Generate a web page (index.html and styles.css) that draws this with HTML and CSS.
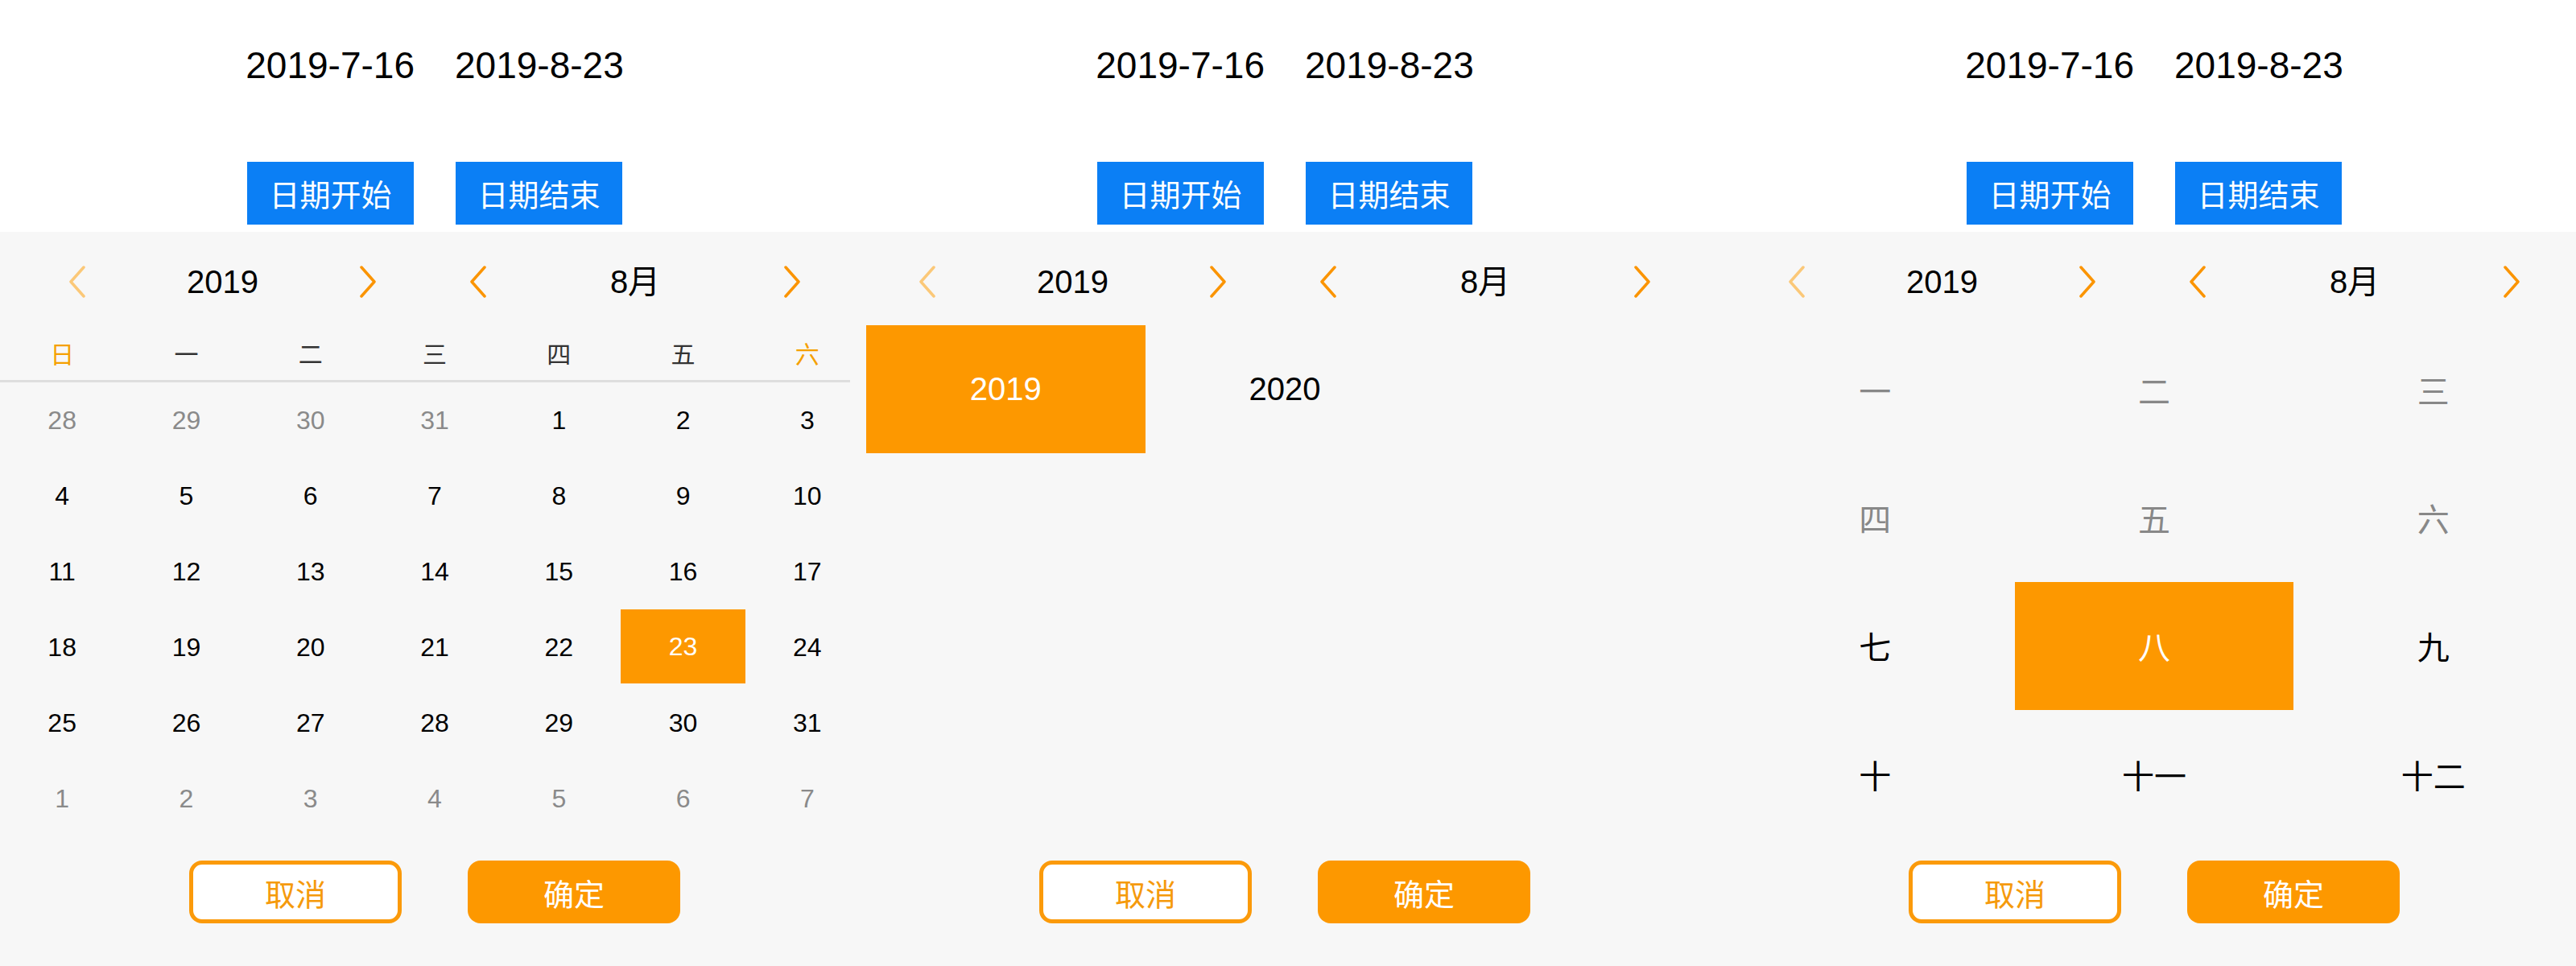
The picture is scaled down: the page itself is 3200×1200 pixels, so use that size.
FILE: index.html
```html
<!DOCTYPE html>
<html lang="zh">
<head>
<meta charset="utf-8">
<title>日期选择</title>
<link rel="stylesheet" href="styles.css">
</head>
<body>
<main class="stage">

  <!-- Panel 1: day view -->
  <section class="panel panel-clip-1">
    <div class="panel-inner">
      <div class="top">
        <div class="dates"><span>2019-7-16</span><span>2019-8-23</span></div>
        <div class="top-btns"><button class="blue-btn">日期开始</button><button class="blue-btn">日期结束</button></div>
      </div>
      <div class="picker">
        <div class="head">
          <div class="head-group year-group">
            <span class="arrow disabled"><svg viewBox="0 0 24 40"><polyline points="20,2 4,20 20,38"/></svg></span>
            <span class="head-title">2019</span>
            <span class="arrow"><svg viewBox="0 0 24 40"><polyline points="4,2 20,20 4,38"/></svg></span>
          </div>
          <div class="head-group month-group">
            <span class="arrow"><svg viewBox="0 0 24 40"><polyline points="20,2 4,20 20,38"/></svg></span>
            <span class="head-title">8月</span>
            <span class="arrow"><svg viewBox="0 0 24 40"><polyline points="4,2 20,20 4,38"/></svg></span>
          </div>
        </div>
        <div class="weekdays">
          <span class="wk weekend">日</span><span class="wk">一</span><span class="wk">二</span><span class="wk">三</span><span class="wk">四</span><span class="wk">五</span><span class="wk weekend">六</span>
        </div>
        <div class="days">
          <span class="day other">28</span><span class="day other">29</span><span class="day other">30</span><span class="day other">31</span><span class="day">1</span><span class="day">2</span><span class="day">3</span>
          <span class="day">4</span><span class="day">5</span><span class="day">6</span><span class="day">7</span><span class="day">8</span><span class="day">9</span><span class="day">10</span>
          <span class="day">11</span><span class="day">12</span><span class="day">13</span><span class="day">14</span><span class="day">15</span><span class="day">16</span><span class="day">17</span>
          <span class="day">18</span><span class="day">19</span><span class="day">20</span><span class="day">21</span><span class="day">22</span><span class="day selected">23</span><span class="day">24</span>
          <span class="day">25</span><span class="day">26</span><span class="day">27</span><span class="day">28</span><span class="day">29</span><span class="day">30</span><span class="day">31</span>
          <span class="day other">1</span><span class="day other">2</span><span class="day other">3</span><span class="day other">4</span><span class="day other">5</span><span class="day other">6</span><span class="day other">7</span>
        </div>
        <div class="actions"><button class="cancel-btn">取消</button><button class="ok-btn">确定</button></div>
      </div>
    </div>
  </section>

  <!-- Panel 2: year view -->
  <section class="panel">
    <div class="panel-inner">
      <div class="top">
        <div class="dates"><span>2019-7-16</span><span>2019-8-23</span></div>
        <div class="top-btns"><button class="blue-btn">日期开始</button><button class="blue-btn">日期结束</button></div>
      </div>
      <div class="picker">
        <div class="head">
          <div class="head-group year-group">
            <span class="arrow disabled"><svg viewBox="0 0 24 40"><polyline points="20,2 4,20 20,38"/></svg></span>
            <span class="head-title">2019</span>
            <span class="arrow"><svg viewBox="0 0 24 40"><polyline points="4,2 20,20 4,38"/></svg></span>
          </div>
          <div class="head-group month-group">
            <span class="arrow"><svg viewBox="0 0 24 40"><polyline points="20,2 4,20 20,38"/></svg></span>
            <span class="head-title">8月</span>
            <span class="arrow"><svg viewBox="0 0 24 40"><polyline points="4,2 20,20 4,38"/></svg></span>
          </div>
        </div>
        <div class="cells">
          <span class="cell selected">2019</span><span class="cell">2020</span>
        </div>
        <div class="actions"><button class="cancel-btn">取消</button><button class="ok-btn">确定</button></div>
      </div>
    </div>
  </section>

  <!-- Panel 3: month view -->
  <section class="panel panel-clip-3">
    <div class="panel-inner">
      <div class="top">
        <div class="dates"><span>2019-7-16</span><span>2019-8-23</span></div>
        <div class="top-btns"><button class="blue-btn">日期开始</button><button class="blue-btn">日期结束</button></div>
      </div>
      <div class="picker">
        <div class="head">
          <div class="head-group year-group">
            <span class="arrow disabled"><svg viewBox="0 0 24 40"><polyline points="20,2 4,20 20,38"/></svg></span>
            <span class="head-title">2019</span>
            <span class="arrow"><svg viewBox="0 0 24 40"><polyline points="4,2 20,20 4,38"/></svg></span>
          </div>
          <div class="head-group month-group">
            <span class="arrow"><svg viewBox="0 0 24 40"><polyline points="20,2 4,20 20,38"/></svg></span>
            <span class="head-title">8月</span>
            <span class="arrow"><svg viewBox="0 0 24 40"><polyline points="4,2 20,20 4,38"/></svg></span>
          </div>
        </div>
        <div class="cells months">
          <span class="cell off">一</span><span class="cell off">二</span><span class="cell off">三</span>
          <span class="cell off">四</span><span class="cell off">五</span><span class="cell off">六</span>
          <span class="cell">七</span><span class="cell selected">八</span><span class="cell">九</span>
          <span class="cell">十</span><span class="cell">十一</span><span class="cell">十二</span>
        </div>
        <div class="actions"><button class="cancel-btn">取消</button><button class="ok-btn">确定</button></div>
      </div>
    </div>
  </section>

</main>
</body>
</html>
```

FILE: styles.css
```css
* { box-sizing: border-box; }

html, body {
  margin: 0;
  padding: 0;
  background: #ffffff;
}

body {
  font-family: "Liberation Sans", "Noto Sans CJK SC", sans-serif;
  color: #000;
}

.stage {
  display: flex;
  width: 3200px;
  height: 1200px;
  overflow: hidden;
}

.panel {
  flex: 0 0 1080px;
  width: 1080px;
  height: 1200px;
  overflow: hidden;
}

.panel-clip-1 { flex-basis: 1056px; width: 1056px; }
.panel-clip-3 { flex-basis: 1064px; width: 1064px; }

.panel-inner {
  width: 1080px;
  height: 1200px;
  display: flex;
  flex-direction: column;
}

/* ---------- top area ---------- */
.top {
  height: 288px;
  flex: 0 0 288px;
  padding-top: 55px;
  background: #fff;
}

.dates {
  display: flex;
  justify-content: center;
  gap: 50px;
  font-size: 46px;
  line-height: 52px;
  color: #000;
}

.top-btns {
  display: flex;
  justify-content: center;
  gap: 52px;
  margin-top: 94px;
}

.blue-btn {
  width: 207px;
  height: 78px;
  border: 0;
  padding: 0;
  background: #0b7ff5;
  color: #fff;
  font-family: "Noto Sans CJK SC", sans-serif;
  font-size: 38px;
  line-height: 78px;
}

/* ---------- picker ---------- */
.picker {
  flex: 1 1 auto;
  display: flex;
  flex-direction: column;
  background: #f7f7f7;
}

.head {
  height: 116px;
  flex: 0 0 116px;
  padding-top: 8px;
  display: flex;
  align-items: center;
}

.head-group {
  display: flex;
  align-items: center;
}

.year-group { margin-left: 74px; }
.month-group { margin-left: 93px; }

.arrow {
  width: 44px;
  height: 40px;
  display: flex;
  justify-content: center;
  align-items: center;
}

.arrow svg {
  width: 24px;
  height: 40px;
  fill: none;
  stroke: #fb9400;
  stroke-width: 3.5;
  stroke-linecap: round;
  stroke-linejoin: round;
}

.arrow.disabled svg { stroke: #fbc878; }

.head-title {
  text-align: center;
  font-size: 40px;
  line-height: 48px;
  color: #000;
}

.year-group .head-title { width: 317px; }
.month-group .head-title { width: 346px; }

/* weekdays */
.weekdays {
  height: 68px;
  flex: 0 0 68px;
  display: grid;
  grid-template-columns: repeat(7, 1fr);
  align-items: center;
  border-bottom: 3px solid #dedede;
  height: 71px;
  flex-basis: 71px;
}

.wk {
  text-align: center;
  font-family: "Noto Sans CJK SC", sans-serif;
  font-size: 30px;
  line-height: 40px;
  color: #333;
}

.wk.weekend { color: #f5a000; }

.days {
  display: grid;
  grid-template-columns: repeat(7, 1fr);
  grid-auto-rows: 94px;
}

.day {
  display: flex;
  justify-content: center;
  align-items: center;
  font-size: 32px;
  color: #000;
}

.day.other { color: #8a8a8a; }

.day.selected {
  background: #fd9800;
  color: #fff;
  height: 92px;
  align-self: start;
}

/* year / month cells */
.cells {
  display: grid;
  grid-template-columns: repeat(3, 1fr);
  grid-auto-rows: 159.3px;
  padding: 0 20px;
}

.cell {
  display: flex;
  justify-content: center;
  align-items: center;
  font-size: 40px;
  color: #000;
}

.months .cell {
  font-family: "Noto Sans CJK SC", sans-serif;
  font-size: 40px;
}

.cell.off { color: #888; }

.cell.selected {
  background: #fd9800;
  color: #fff;
}

/* actions */
.actions {
  margin-top: auto;
  padding-bottom: 53px;
  display: flex;
  justify-content: center;
  gap: 82px;
}

.cancel-btn, .ok-btn {
  width: 264px;
  height: 78px;
  border-radius: 16px;
  padding: 0;
  font-family: "Noto Sans CJK SC", sans-serif;
  font-size: 38px;
}

.cancel-btn {
  background: #fff;
  border: 5px solid #fb9a0a;
  color: #f59a0c;
}

.ok-btn {
  background: #fd9800;
  border: 0;
  color: #fff;
}
```
